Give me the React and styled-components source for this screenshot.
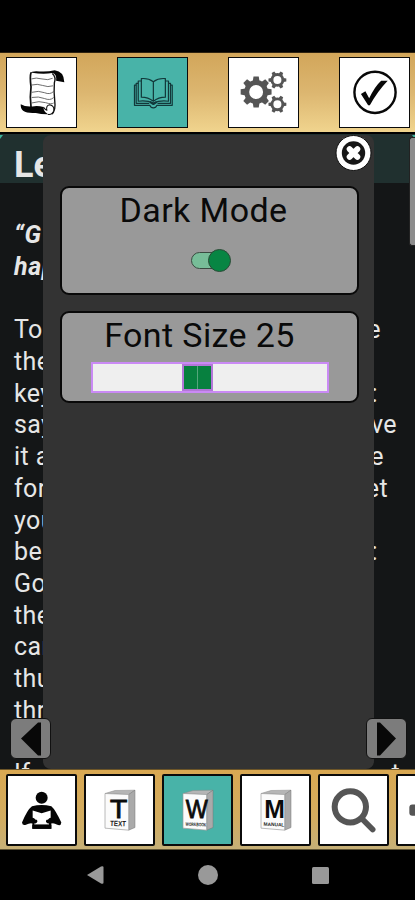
import React from 'react';
import styled, { createGlobalStyle } from 'styled-components';

const GlobalStyle = createGlobalStyle`
    * { box-sizing: border-box; }
    body {
        margin: 0;
        background: #000;
        font-family: Roboto, sans-serif;
        overflow: hidden;
    }
`;

const Screen = styled.div`
    width: 415px;
    height: 900px;
    background: #000;
    overflow: hidden;
    display: flex;
    flex-direction: column;
`;

const StatusBar = styled.div`
    flex: 0 0 52px;
`;

const Toolbar = styled.nav`
    flex: 0 0 ${props => (props.$bottom ? '81px' : '82px')};
    display: flex;
    gap: ${props => (props.$bottom ? '7px' : '40px')};
    padding: 4px 0 0 6px;
    overflow: hidden;
    border-top: 1px solid ${props => (props.$bottom ? '#6d5527' : '#2e2210')};
    border-bottom: ${props => (props.$bottom ? '1px solid #5f5435' : '2px solid #000')};
    background: ${props => (props.$bottom
        ? 'linear-gradient(#d9a852, #d2ac60 60%, #c6b077)'
        : 'linear-gradient(#d2a65a, #dcb670 50%, #f0d48e)')};
`;

const Tile = styled.button`
    flex: 0 0 71px;
    height: ${props => (props.$tall ? '72px' : '71px')};
    padding: 0;
    border: ${props => (props.$tall ? '2px' : '1.5px')} solid #0b0b0b;
    border-radius: ${props => (props.$tall ? '2px' : '0')};
    background: ${props => (props.$active ? '#48b3a8' : '#fff')};

    svg {
        display: block;
        width: 100%;
        height: 100%;
    }
`;

const Reader = styled.main`
    position: relative;
    flex: 0 0 635px;
    overflow: hidden;
    background: #141617;
    color: #e6e6e6;
`;

const LessonTitle = styled.h1`
    margin: 0;
    height: 49px;
    padding: 13px 0 0 14px;
    background: #20302f;
    font-size: 36px;
    line-height: 36px;
    font-weight: 700;
`;

const Quote = styled.p`
    margin: 36px 0 32px;
    padding-left: 14px;
    font-size: 25px;
    line-height: 31.7px;
    letter-spacing: 0.6px;
    font-weight: 700;
    font-style: italic;
`;

const Line = styled.div`
    width: ${props => props.$end || 380}px;
    height: 31.7px;
    padding-left: 14px;
    display: flex;
    justify-content: space-between;
    font-size: 25px;
    line-height: 31.7px;
    letter-spacing: 0.4px;
`;

const Scrollbar = styled.div`
    position: absolute;
    top: 3px;
    right: 0;
    width: 6px;
    height: 109px;
    border: 1px solid #222;
    border-right: 0;
    border-radius: 3px 0 0 3px;
    background: #8c8c8c;
`;

const Corner = styled.div`
    position: absolute;
    top: 1px;
    ${props => props.$side}: 0;
    width: 3px;
    height: 4px;
    background: #3eb39a;
    clip-path: ${props => (props.$side === 'left' ? 'polygon(0 0, 100% 0, 0 100%)' : 'polygon(0 0, 100% 0, 100% 100%)')};
`;

const Panel = styled.section`
    position: absolute;
    top: 1px;
    left: 43px;
    width: 331px;
    height: 634px;
    padding: 51px 15px 0 17px;
    display: flex;
    flex-direction: column;
    gap: 16px;
    border-radius: 8px;
    background: #333;
`;

const Card = styled.div`
    height: ${props => props.$height}px;
    padding-top: 1px;
    display: flex;
    flex-direction: column;
    align-items: center;
    border: 2px solid #090909;
    border-radius: 9px;
    background: #999;
`;

const Label = styled.div`
    height: 43px;
    padding-right: ${props => props.$shift}px;
    font-size: 34px;
    line-height: 43px;
    letter-spacing: 0.4px;
    white-space: nowrap;
    color: #0a0a0a;
`;

const Toggle = styled.div`
    width: 40px;
    height: 23px;
    margin-top: 17px;
    margin-left: 2px;
    display: flex;
    align-items: center;
`;

const Track = styled.div`
    width: 30px;
    height: 17px;
    border: 1px solid #3a4a40;
    border-radius: 9px;
    background: #77bd98;
`;

const Knob = styled.div`
    width: 23px;
    height: 23px;
    margin-left: -13px;
    border: 1px solid #2b4a36;
    border-radius: 50%;
    background: #078543;
`;

const Slider = styled.div`
    width: 238px;
    height: 31px;
    margin-top: 5px;
    display: flex;
    padding-left: 89px;
    border: 2px solid #ca8af5;
    background: #efefef;
`;

const Handle = styled.div`
    width: 31px;
    height: 27px;
    border: 2px solid #b377d8;
    background: linear-gradient(90deg, #07803f 13px, #55a67b 13px, #55a67b 14px, #07803f 14px);
`;

const Close = styled.button`
    position: absolute;
    top: 0;
    left: 335px;
    padding: 0;
    border: 0;
    background: none;

    svg { display: block; }
`;

const PageButton = styled.button`
    position: absolute;
    top: 584px;
    left: ${props => props.$left}px;
    width: 41px;
    height: 41px;
    padding: 0;
    border: 1px solid #111;
    border-radius: 6px;
    background: #7c7c7c;

    svg { display: block; margin: 0 auto; }
`;

const SystemNav = styled.footer`
    flex: 1;
    display: flex;
    align-items: flex-start;
    padding: 14px 85px 0 85px;
    justify-content: space-between;
`;

const ScrollIcon = () => (
    <svg viewBox="6 6 201 201">
        <path d="M76 48Q72 60 76 90Q72 120 76 150" fill="none" stroke="#111" strokeWidth="5" />
        <path d="M74 50Q78 43 100 45T145 42Q172 45 173 77L149 72Q151 52 138 50Q110 54 79 49Z" fill="#050505" />
        <path d="M138 51Q150 62 144 78Q142 105 145 130Q149 160 136 170" fill="none" stroke="#111" strokeWidth="4" />
        <path d="M77 67Q90 62 108 67T139 65M76 85Q95 80 110 86T140 87M78 106Q98 100 115 107T142 103M78 121Q98 117 115 124T142 121M78 137Q100 130 118 136T142 137" fill="none" stroke="#555" strokeWidth="2.5" />
        <path d="M46 141Q60 149 80 147Q96 144 112 149Q113 166 129 170Q108 171 90 166Q65 168 53 160Q45 154 46 141Z" fill="#050505" />
        <path d="M112 149Q119 158 122 158Q119 144 130 142Q145 145 142 160Q136 173 125 170" fill="#fff" stroke="#111" strokeWidth="3" />
    </svg>
);

const BookIcon = () => (
    <svg viewBox="6 6 201 201" fill="none" stroke="#12383a" strokeWidth="3.5" strokeLinejoin="round">
        <path d="M109 75Q94 64 74 66V120Q94 120 109 132Q124 120 144 120V66Q124 64 109 75V132" />
        <path d="M74 73H65V132Q90 129 109 137Q128 129 153 132V73H144" />
        <path d="M65 80H59V138H97M153 80H159V138H121" />
        <path d="M59 85H54V144H99Q101 151 109 151T119 144H164V85H159" />
        <path d="M99 134L109 140L119 134" strokeWidth="6" />
    </svg>
);

const Gear = ({ x, y, r, teeth }) => (
    <g transform={`translate(${x} ${y})`}>
        {Array.from({ length: teeth }, (_, i) => (
            <path
                key={i}
                d={`M${-r * 0.22} ${-r * 0.68}L${-r * 0.17} ${-r}H${r * 0.17}L${r * 0.22} ${-r * 0.68}Z`}
                transform={`rotate(${(i * 360) / teeth + (teeth === 6 ? 30 : 0)})`}
                fill="#555"
            />
        ))}
        <circle r={r * 0.61} fill="none" stroke="#555" strokeWidth={r * 0.32} />
    </g>
);

const GearsIcon = () => (
    <svg viewBox="6 6 201 201">
        <Gear x={85} y={105} r={45} teeth={8} />
        <Gear x={147} y={70} r={26} teeth={6} />
        <Gear x={147} y={141} r={26} teeth={6} />
    </svg>
);

const CheckIcon = () => (
    <svg viewBox="6 6 201 201">
        <circle cx="108" cy="106" r="60" fill="none" stroke="#080808" strokeWidth="7" />
        <path d="M67 111L80 103L91 123Q108 88 126 72H145Q114 104 93 144H88Z" fill="#080808" />
    </svg>
);

const PersonIcon = () => (
    <svg viewBox="6 6 201 201" fill="#050505">
        <circle cx="107" cy="70" r="18" />
        <path d="M78 95Q107 88 136 95Q148 105 166 144Q165 155 154 151L136 143V163H79V143L60 151Q49 154 48 144Q64 105 78 95Z" />
        <path d="M80 108L107 116L134 108V130Q124 133 126 141L129 144V150H85V144L89 141Q90 133 80 130Z" fill="#fff" />
        <path d="M79 151H136V163H79Z" />
        <path d="M68 134L92 136Q98 143 88 147L68 146ZM146 134L122 136Q116 143 126 147L146 146Z" />
    </svg>
);

const BookletIcon = ({ letter, caption, size, bold }) => (
    <svg viewBox="6 6 201 201" fontFamily="Liberation Sans, sans-serif" textAnchor="middle">
        <path d="M63 57L93 48L153 47L134 61Z" fill="#b5b5b5" stroke="#888" strokeWidth="1.5" />
        <path d="M134 60L153 47V159L134 167Z" fill="#aaa" stroke="#777" strokeWidth="1.5" />
        <path d="M63 57L134 60V167L63 161Z" fill="#fbfbfb" stroke="#999" strokeWidth="2" />
        <text
            x="104"
            y="130"
            fontSize="78"
            fontWeight={bold ? 700 : 400}
            stroke="#0b0b0b"
            strokeWidth={bold ? 0 : 2.5}
            textLength={size}
            lengthAdjust="spacingAndGlyphs"
            fill="#0b0b0b"
        >
            {letter}
        </text>
        <text
            x="102"
            y="155"
            fontSize={caption === 'TEXT' ? 23 : 15}
            fontWeight="700"
            textLength={caption === 'TEXT' ? 48 : 62}
            lengthAdjust="spacingAndGlyphs"
            fill="#222"
            transform="rotate(2 102 150)"
        >
            {caption}
        </text>
    </svg>
);

const SearchIcon = () => (
    <svg viewBox="6 6 201 201" fill="none" stroke="#555">
        <circle cx="97" cy="97" r="47" strokeWidth="18" />
        <path d="M132 133L164 165" strokeWidth="17" strokeLinecap="round" />
    </svg>
);

const MoreIcon = () => (
    <svg viewBox="6 6 201 201">
        <rect x="40" y="90" width="130" height="34" rx="9" fill="#555" />
    </svg>
);

const lines = [
    { start: 'To', end: 'e', x: 381 },
    { start: 'the' },
    { start: 'key', end: ':', x: 378 },
    { start: 'say', end: 've', x: 397 },
    { start: 'it a', end: 'e', x: 384 },
    { start: 'for', end: 'et', x: 388 },
    { start: 'you' },
    { start: 'be', end: ':', x: 378 },
    { start: 'God' },
    { start: 'the' },
    { start: 'can' },
    { start: 'thu' },
    { start: 'thr' },
    { start: '' },
    { start: 'If', end: 't', x: 400 },
];

const SettingsPanel = () => (
    <Panel>
        <Card $height={109}>
            <Label $shift={12}>Dark Mode</Label>
            <Toggle>
                <Track />
                <Knob />
            </Toggle>
        </Card>
        <Card $height={92}>
            <Label $shift={20}>Font Size 25</Label>
            <Slider>
                <Handle />
            </Slider>
        </Card>
    </Panel>
);

const App = () => {
    return (
        <Screen>
            <GlobalStyle />
            <StatusBar />
            <Toolbar>
                <Tile><ScrollIcon /></Tile>
                <Tile $active><BookIcon /></Tile>
                <Tile><GearsIcon /></Tile>
                <Tile><CheckIcon /></Tile>
            </Toolbar>
            <Reader>
                <LessonTitle>Le</LessonTitle>
                <Quote>“G<br />hap</Quote>
                {lines.map((line, i) => (
                    <Line key={i} $end={line.x}>
                        <span>{line.start}</span>
                        <span>{line.end}</span>
                    </Line>
                ))}
                <Corner $side="left" />
                <Corner $side="right" />
                <Scrollbar />
                <SettingsPanel />
                <Close aria-label="Close">
                    <svg width="37" height="37" viewBox="0 0 37 37">
                        <circle cx="18.5" cy="19" r="17.5" fill="#fff" stroke="#111" strokeWidth="1" />
                        <circle cx="18.5" cy="19" r="11.7" fill="#161616" />
                        <path d="M14.6 15.1L22.4 22.9M22.4 15.1L14.6 22.9" stroke="#fff" strokeWidth="5.8" strokeLinecap="round" />
                    </svg>
                </Close>
                <PageButton $left={10} aria-label="Previous">
                    <svg width="37" height="37" viewBox="0 0 37 37"><path d="M9 18.5L26 2.5H29V35.5H26Z" fill="#080808" /></svg>
                </PageButton>
                <PageButton $left={366} aria-label="Next">
                    <svg width="37" height="37" viewBox="0 0 37 37"><path d="M28 18.5L12 2.5H9V35.5H12Z" fill="#080808" /></svg>
                </PageButton>
            </Reader>
            <Toolbar $bottom>
                <Tile $tall><PersonIcon /></Tile>
                <Tile $tall><BookletIcon letter="T" caption="TEXT" size={52} /></Tile>
                <Tile $tall $active><BookletIcon letter="W" caption="WORKBOOK" size={66} /></Tile>
                <Tile $tall><BookletIcon letter="M" caption="MANUAL" size={62} bold /></Tile>
                <Tile $tall><SearchIcon /></Tile>
                <Tile $tall><MoreIcon /></Tile>
            </Toolbar>
            <SystemNav>
                <svg width="20" height="22" viewBox="0 0 20 22"><path d="M2 11L16 2.5Q18.5 1.5 18.5 3.5V18.5Q18.5 20.5 16 19.5Z" fill="#999" /></svg>
                <svg width="22" height="22" viewBox="0 0 22 22"><circle cx="11" cy="11" r="10" fill="#999" /></svg>
                <svg width="20" height="22" viewBox="0 0 20 22"><rect x="2" y="3" width="17" height="17" rx="1.5" fill="#999" /></svg>
            </SystemNav>
        </Screen>
    );
};

export default App;
